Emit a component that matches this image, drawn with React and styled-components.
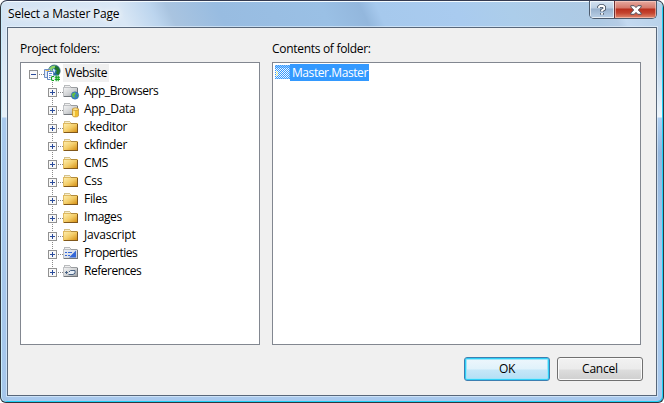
import React from "react";
import styled, { createGlobalStyle, css } from "styled-components";

const GlobalStyle = createGlobalStyle`
  * { box-sizing: border-box; }
  html, body { margin: 0; background: #fff; overflow: hidden; }
  body { font: 12px/18px "Open Sans", "Noto Sans", sans-serif; color: #000; }
`;

const Window = styled.main`
  width: 664px;
  height: 403px;
  border: 1px solid #30363e;
  border-top-color: #343a50;
  border-radius: 7px 7px 6px 6px;
  box-shadow: inset 0 1px 0 #f4fbff, inset 1px 0 0 #c9ecfb, inset -1px -1px 0 #1fd0f5;
  background:
    linear-gradient(180deg, #d3e3f3 0, #e6f0f8 89px, #a9c9ed 90px, #a5c6eb 100%) 0 27px / 7px 100% no-repeat,
    linear-gradient(180deg, #b5cfe8 0, #b5d0ea 23px, #eef5fb 89px, #afcff2 90px, #93b6dd 125px, #a9c9ed 233px, #a9c9ed 100%) 100% 27px / 7px 100% no-repeat,
    linear-gradient(65deg, #d3e3f3 0, #d9e7f5 115px, #bcd5ee 145px, #a9c4e0 160px, #98bce1 205px, #9ac0e5 300px, #93b7dd 335px, #a6c9ed 350px, #a9cbef 420px, #accdea 470px, #aecae4 545px, #b5cce5 562px, #c3d9f0 570px, #b5cfe8 100%) top / 100% 28px no-repeat,
    #a9c9ed;
  display: flex;
  flex-direction: column;
  padding: 0 6px 6px;
`;

const TitleBar = styled.header`
  height: 26px;
  display: flex;
  justify-content: space-between;
  align-items: flex-start;
`;

const Text = styled.span`
  display: inline-block;
  white-space: nowrap;
  letter-spacing: ${(p) => p.$track ?? -0.3}px;
`;

const Title = styled(Text)`
  padding: 4px 0 0 1px;
  text-shadow: 0 0 6px #fff, 0 0 8px #fff;
`;

const Captions = styled.div`
  display: flex;
  width: 68px;
  height: 18px;
  border: 1px solid #4d5b6d;
  border-top: 0;
  border-radius: 0 0 5px 5px;
  overflow: hidden;
`;

const CaptionButton = styled.button`
  width: ${(p) => (p.$close ? 42 : 24)}px;
  height: 17px;
  padding: 0;
  border: 0;
  display: flex;
  align-items: center;
  justify-content: center;
  ${(p) =>
    p.$close
      ? css`
          border-left: 1px solid #6b2f33;
          background: linear-gradient(#e6aaa0 0, #d5786a 7px, #b92f1d 8px, #c4432e 12px, #e08a70 100%);
          box-shadow: inset 0 0 0 1px rgba(255, 215, 205, 0.55);
        `
      : css`
          background: linear-gradient(#d3e2f1 0, #bccfe3 7px, #98b1cd 8px, #b9cfe6 100%);
          box-shadow: inset 0 0 0 1px rgba(255, 255, 255, 0.65);
        `}
`;

const Client = styled.section`
  flex: 1;
  border: 1px solid #58677a;
  outline: 1px solid rgba(235, 246, 255, 0.55);
  background: #f0f0f0;
  padding: 12px 13px 0 12px;
  display: flex;
  flex-direction: column;
`;

const Panes = styled.div`
  display: grid;
  grid-template-columns: 240px 369px;
  column-gap: 12px;
`;

const Pane = styled.div`
  display: flex;
  flex-direction: column;
`;

const Caption = styled(Text)`
  height: 22px;
`;

const ListBox = styled.div`
  height: 283px;
  background: #fff;
  border: 1px solid #828790;
  padding: 1px 2px;
`;

const Row = styled.div`
  display: flex;
  height: 18px;
  padding-left: ${(p) => (p.$root ? 6 : 25)}px;
`;

const Branch = styled.svg`
  width: 15px;
  height: 18px;
  flex: none;
`;

const Icon = styled.svg`
  width: ${(p) => p.$w || 16}px;
  height: 18px;
  flex: none;
  overflow: visible;
`;

const Label = styled(Text)`
  height: 18px;
  margin-left: 3px;
  padding: 0 2px;
  line-height: 17px;
  background: ${(p) => (p.$root ? "#f0f0f0" : "transparent")};
`;

const FileRow = styled.div`
  display: flex;
  height: 17px;
`;

const FileName = styled(Text)`
  width: 79px;
  height: 17px;
  padding-left: 2px;
  line-height: 18px;
  color: #fff;
  background: #3399ff;
`;

const Actions = styled.footer`
  display: flex;
  justify-content: flex-end;
  gap: 7px;
  margin-top: 12px;
`;

const PushButton = styled.button`
  width: 86px;
  height: 24px;
  padding: 0 0 1px;
  font: inherit;
  color: #000;
  border-radius: 3px;
  border: 1px solid ${(p) => (p.$primary ? "#3c7fb1" : "#707070")};
  box-shadow: ${(p) =>
    p.$primary ? "inset 0 0 0 1px #2fd0f7, inset 0 0 0 2px #9ee6fa" : "inset 0 0 0 1px #fbfbfb"};
  background: ${(p) =>
    p.$primary
      ? "linear-gradient(#eef7fc 0, #e0f2fb 11px, #c5e7f8 12px, #b2def5 100%)"
      : "linear-gradient(#f2f2f2 0, #ebebeb 11px, #dddddd 12px, #cfcfcf 100%)"};
`;

function Expander({ root, last }) {
  const line = "#8a8a8a";
  return (
    <Branch viewBox="0 0 15 18" shapeRendering="crispEdges">
      {!root && <path d={last ? "M4.5 0V6" : "M4.5 0V18"} stroke={line} strokeDasharray="1 1" />}
      <path d="M10 10.5H15" stroke={line} strokeDasharray="1 1" />
      <rect x="0.5" y="6.5" width="8" height="8" fill="#f8f8f8" stroke="#919191" />
      <path d="M2 10.5H7" stroke="#294b9b" />
      {!root && <path d="M4.5 8V13" stroke="#294b9b" />}
    </Branch>
  );
}

function FolderIcon({ kind }) {
  const gold = !kind;
  return (
    <Icon viewBox="0 0 16 18">
      <defs>
        <linearGradient id="gold" x1="0" y1="0" x2="1" y2="1">
          <stop offset="0" stopColor="#fff3b8" />
          <stop offset=".5" stopColor="#f3cd68" />
          <stop offset="1" stopColor="#cf8404" />
        </linearGradient>
        <linearGradient id="grey" x1="0" y1="0" x2="1" y2="1">
          <stop offset="0" stopColor="#f7f7f7" />
          <stop offset=".5" stopColor="#d2d4d6" />
          <stop offset="1" stopColor="#94989d" />
        </linearGradient>
      </defs>
      <g shapeRendering="crispEdges">
        <path d="M1 3H7V4H8V5H14V7H1Z" fill={gold ? "#d5c28c" : "#b9bbbd"} />
        <path d="M2 4H7V5H2Z" fill={gold ? "#f7edc8" : "#efefef"} />
        <rect x="0" y="5" width="15" height="10" fill={`url(#${gold ? "gold" : "grey"})`} />
        <path d="M.5 15V5.5H14" fill="none" stroke={gold ? "#dfb95f" : "#bfc1c4"} />
        <path d="M8 5.5H14" stroke={gold ? "#b18b3e" : "#9a9da0"} />
        <path d="M1 14.5H14.5V6" fill="none" stroke={gold ? "#80571b" : "#73777c"} />
      </g>
      {kind === "globe" && (
        <g>
          <circle cx="12" cy="13.5" r="3.7" fill="#3580c8" stroke="#2a619f" strokeWidth=".5" />
          <path d="M8.8 12L11.6 10.3L13 11.8L11.4 13L11.8 16L9.6 15Z" fill="#67bd45" />
          <path d="M13.3 12.5L15.2 13L14 15.7Z" fill="#46a03f" />
        </g>
      )}
      {kind === "data" && (
        <g stroke="#b87e12" strokeWidth=".6">
          <path d="M9.5 9V15.6C9.5 17.4 15.5 17.4 15.5 15.6V9Z" fill="#f1bf30" />
          <path d="M11 10V16" stroke="#fff1a6" strokeWidth="1.5" />
          <ellipse cx="12.5" cy="9.2" rx="3" ry="1.3" fill="#ffe793" />
        </g>
      )}
      {kind === "props" && (
        <g>
          <rect x="1" y="6" width="13" height="8" fill="#e4ebf6" opacity=".6" />
          <path d="M6 13.5L13 6.5V13.5Z" fill="#3568d8" />
          <path d="M2 8.5H4M5 8.5H9M2 11.5H4M5 11.5H7" stroke="#3568d8" strokeWidth="1.2" />
        </g>
      )}
      {kind === "refs" && (
        <g fill="none" stroke="#4a6485">
          <path d="M2 10.5H5M3.5 9V12" />
          <path d="M5.5 12.5H10L12 11.2V8.5H7.5L6 10" fill="#e8eff7" />
        </g>
      )}
    </Icon>
  );
}

function WebsiteIcon() {
  return (
    <Icon viewBox="0 0 16 18">
      <circle cx="10.3" cy="6.9" r="5.9" fill="#276f9c" stroke="#184f64" strokeWidth=".6" />
      <path d="M5 4.5Q8 .9 12 1.8L10.5 4L8 5L8.5 8L5 8Z" fill="#8ed667" />
      <path d="M11 2L14 2.8L16 6.5L14.5 11L12 9.5L13 6.5L11 5.5Z" fill="#1f7529" />
      <path d="M9 4.5L11.5 6L10.5 9L8.5 8Z" fill="#c9e5f7" />
      <path d="M.5 5.5H6.5V13.5H.5Z" fill="#e0eafa" stroke="#6f90c5" />
      <path d="M3.5 7.5H9.5V15.5H3.5Z" fill="#fff" stroke="#5f84c2" />
      <path d="M1.5 6.5H5" stroke="#edbd4c" fill="none" />
      <path d="M5 9.5H8M5 11.5H8M5 13.5H7" stroke="#5c86d2" />
      <path d="M6.5 11.5H16V17.5H6.5Z" fill="#fff" opacity=".9" />
      <path d="M10 12.5H8.3L7.5 13.3V15.7L8.3 16.5H10M12.2 11.5V17.2M14.2 11.5V17.2M10.7 13.3H16M10.7 15.4H16" stroke="#0fa31c" strokeWidth="1.1" fill="none" />
    </Icon>
  );
}

function FileIcon() {
  return (
    <Icon $w={15} viewBox="0 0 15 18" shapeRendering="crispEdges">
      <defs>
        <pattern id="dither" width="2" height="2" patternUnits="userSpaceOnUse">
          <rect width="2" height="2" fill="#f4f9ff" />
          <path d="M0 0H1V1H0ZM1 1H2V2H1Z" fill="#3399ff" />
        </pattern>
      </defs>
      <rect y="1" width="15" height="14" fill="url(#dither)" />
      <path d="M0 1H15V4H0Z" fill="#3399ff" opacity=".5" />
      <path d="M14 1H15V15H14ZM0 14H15V15H0Z" fill="#3399ff" opacity=".4" />
      <path d="M1 7H2V8H1ZM2 8H3V9H2ZM1 9H2V10H1ZM2 10H3V11H2ZM1 11H2V12H1Z" fill="#dce38b" />
    </Icon>
  );
}

const folders = [
  { name: "App_Browsers", kind: "globe", track: -0.47 },
  { name: "App_Data", kind: "data" },
  { name: "ckeditor" },
  { name: "ckfinder" },
  { name: "CMS" },
  { name: "Css" },
  { name: "Files" },
  { name: "Images", track: -0.4 },
  { name: "Javascript", track: -0.2 },
  { name: "Properties", kind: "props", track: -0.48 },
  { name: "References", kind: "refs", track: -0.48 },
];

export default function App() {
  return (
    <>
      <GlobalStyle />
      <Window>
        <TitleBar>
          <Title $track={-0.2}>Select a Master Page</Title>
          <Captions>
            <CaptionButton aria-label="Help">
              <svg width="10" height="12" viewBox="0 0 10 12" fill="none">
                <path d="M2 4V3L3.2 2H6L7.2 3V5L5 6.5V7.5M5 9V10.8" stroke="#4b5665" strokeWidth="3.6" />
                <path d="M2 4V3L3.2 2H6L7.2 3V5L5 6.5V7.5M5 9V10.8" stroke="#fff" strokeWidth="1.8" />
              </svg>
            </CaptionButton>
            <CaptionButton $close aria-label="Close">
              <svg width="12" height="10" viewBox="0 0 12 10">
                <path d="M.8 .7H4.2L6 2.6L7.8 .7H11.2V2L8.3 5L11.2 8V9.3H7.8L6 7.4L4.2 9.3H.8V8L3.7 5L.8 2Z" fill="#fff" stroke="#53525d" />
              </svg>
            </CaptionButton>
          </Captions>
        </TitleBar>
        <Client>
          <Panes>
            <Pane>
              <Caption>Project folders:</Caption>
              <ListBox>
                <Row $root>
                  <Expander root />
                  <WebsiteIcon />
                  <Label $root $track={-0.42}>Website</Label>
                </Row>
                {folders.map((f, i) => (
                  <Row key={f.name}>
                    <Expander last={i === folders.length - 1} />
                    <FolderIcon kind={f.kind} />
                    <Label $track={f.track}>{f.name}</Label>
                  </Row>
                ))}
              </ListBox>
            </Pane>
            <Pane>
              <Caption>Contents of folder:</Caption>
              <ListBox>
                <FileRow>
                  <FileIcon />
                  <FileName $track={-0.42}>Master.Master</FileName>
                </FileRow>
              </ListBox>
            </Pane>
          </Panes>
          <Actions>
            <PushButton $primary><Text>OK</Text></PushButton>
            <PushButton><Text $track={-0.2}>Cancel</Text></PushButton>
          </Actions>
        </Client>
      </Window>
    </>
  );
}
